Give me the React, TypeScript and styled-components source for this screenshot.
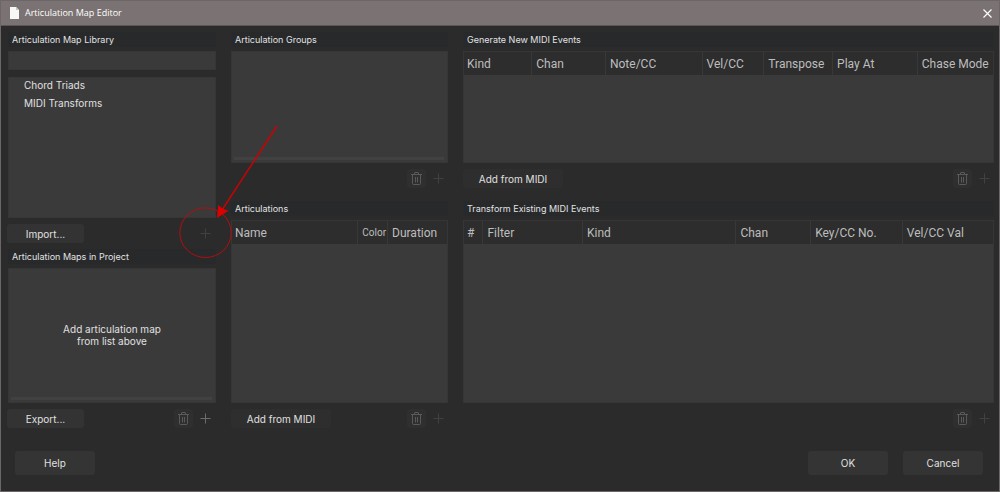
import React from 'react';
import styled, { createGlobalStyle } from 'styled-components';

const GlobalStyle = createGlobalStyle`
  *, *::before, *::after { box-sizing: border-box; }
  body { margin: 0; background: #2b2b2b; }
  button, input { font: inherit; color: inherit; }
`;

const Window = styled.div`
  position: relative;
  display: flex;
  flex-direction: column;
  min-height: 100vh;
  border: 1px solid #6b6767;
  background: #2b2b2b;
  color: #e0e0e0;
  font-family: Inter, Roboto, "Liberation Sans", sans-serif;
  font-size: 10px;
  line-height: 12px;
`;

const TitleBar = styled.header`
  display: flex;
  align-items: center;
  height: 25px;
  padding: 0 5px 0 7px;
  background: #7b7373;
  border-bottom: 1px solid #5a5656;
`;

const WindowTitle = styled.h1`
  flex: 1;
  margin: 0 0 0 5px;
  font: 400 9px/14px "Open Sans", "Noto Sans", sans-serif;
  color: #ffffff;
`;

const CloseButton = styled.button`
  display: flex;
  padding: 2px;
  border: 0;
  background: none;
`;

const Main = styled.main`
  flex: 1;
  display: grid;
  grid-template-columns: 208fr 217fr 531fr;
  gap: 15px;
  padding: 6px 5px 0 7px;
`;

const Column = styled.div`
  display: flex;
  flex-direction: column;
  min-width: 0;
`;

const Section = styled.section<{ $grow?: boolean; $after?: number }>`
  display: flex;
  flex-direction: column;
  flex: ${p => (p.$grow ? '1 0 auto' : '0 0 auto')};
  margin-bottom: ${p => p.$after ?? 0}px;
`;

const Heading = styled.h2`
  margin: 0 0 4px;
  padding: 0 4px;
  background: #27292b;
  color: #e2e2e2;
  font-size: 9px;
  font-weight: 400;
  line-height: 15px;
`;

const SearchBox = styled.input`
  width: 100%;
  height: 19px;
  margin-bottom: 7px;
  padding: 0 6px;
  border: 1px solid #363636;
  background: #3a3a3a;
  outline: none;
`;

const Panel = styled.div<{ $height: number; $grow?: boolean }>`
  display: flex;
  flex-direction: column;
  flex: ${p => (p.$grow ? '1 0 auto' : '0 0 auto')};
  min-height: ${p => p.$height}px;
  border: 1px solid #363636;
  background: #3a3a3a;
`;

const MapList = styled.ul`
  display: flex;
  flex-direction: column;
  gap: 4px;
  margin: 0;
  padding: 0 15px;
  list-style: none;
  line-height: 14px;
`;

const EmptyNote = styled.p`
  margin: auto;
  padding-top: 4px;
  text-align: center;
`;

const ScrollTrack = styled.div`
  height: 3px;
  margin: 0 3px 2px 2px;
  background: #414141;

  &:only-child { margin-top: auto; }
`;

const EventTable = styled.table`
  width: 100%;
  table-layout: fixed;
  border-collapse: collapse;
`;

const HeadCell = styled.th<{ $share: number; $small?: boolean }>`
  width: ${p => p.$share}%;
  height: 23px;
  padding: 0 0 0 4px;
  border-right: 1px solid #383838;
  background: #2d2d2d;
  color: #bdbdbd;
  font-family: Roboto, "Liberation Sans", sans-serif;
  font-size: ${p => (p.$small ? 10 : 12)}px;
  font-weight: 400;
  text-align: left;
  white-space: nowrap;

  &:first-child { padding-left: 3px; }
  &:last-child { border-right: 0; }
`;

const Toolbar = styled.div<{ $outset?: boolean }>`
  display: flex;
  align-items: center;
  gap: 3px;
  height: 19px;
  margin: ${p => (p.$outset ? '6px 1px 0 -1px' : '6px 0 0')};
`;

const Spacer = styled.span`
  flex: 1;
`;

const TextButton = styled.button<{ $width: number; $faint?: boolean }>`
  width: ${p => p.$width}px;
  height: 19px;
  padding: 0;
  border: 0;
  border-radius: 3px;
  background: ${p => (p.$faint ? '#2e2e2e' : '#333333')};
`;

const IconButton = styled.button<{ $filled?: boolean; $tone: string }>`
  display: flex;
  align-items: center;
  justify-content: center;
  width: 19px;
  height: 19px;
  padding: 0;
  border: 0;
  border-radius: 3px;
  background: ${p => (p.$filled ? '#2f2f2f' : 'none')};
  color: ${p => p.$tone};
`;

const Footer = styled.footer`
  display: flex;
  gap: 15px;
  padding: 23px 16px 16px 14px;
`;

const DialogButton = styled.button`
  width: 80px;
  height: 24px;
  padding: 0;
  border: 0;
  border-radius: 3px;
  background: #343434;
`;

const Annotation = styled.svg`
  position: absolute;
  left: 175px;
  top: 119px;
  pointer-events: none;
`;

const PageIcon = () => (
  <svg width="12" height="14" viewBox="0 0 12 14" aria-hidden="true">
    <path d="M2 1h6l3 3v9h-9z" fill="#f7f7f7" />
    <path d="M8 1v3h3z" fill="#c9c6c6" />
  </svg>
);

const CloseIcon = () => (
  <svg width="9" height="9" viewBox="0 0 9 9" aria-hidden="true">
    <path d="M.5.5l8 8M8.5.5l-8 8" stroke="#fff" strokeWidth="1.1" />
  </svg>
);

const TrashIcon = () => (
  <svg width="11" height="13" viewBox="0 0 11 13" fill="none" stroke="currentColor" aria-hidden="true">
    <path d="M0 2.5h11M3.5 2.5v-1.5q0-.5.5-.5h3q.5 0 .5.5v1.5M1.5 2.5v9q0 1 1 1h6q1 0 1-1v-9M4.5 5v5.5M6.5 5v5.5" />
  </svg>
);

const PlusIcon = () => (
  <svg width="11" height="11" viewBox="0 0 11 11" aria-hidden="true">
    <path d="M5.5.5v10M.5 5.5h10" stroke="currentColor" />
  </svg>
);

const TRASH_TONE = '#5a5a5a';

const AddRemove = ({ what, tone = '#404242', removable = true }: { what: string; tone?: string; removable?: boolean }) => (
  <>
    <Spacer />
    {removable && (
      <IconButton $filled $tone={TRASH_TONE} aria-label={`Remove ${what}`}><TrashIcon /></IconButton>
    )}
    <IconButton $tone={tone} aria-label={`Add ${what}`}><PlusIcon /></IconButton>
  </>
);

type ColumnDef = { label: string; size: number; small?: boolean };

const Table = ({ label, columns }: { label: string; columns: ColumnDef[] }) => {
  const total = columns.reduce((sum, c) => sum + c.size, 0);
  return (
    <EventTable aria-label={label}>
      <thead>
        <tr>
          {columns.map(c => (
            <HeadCell key={c.label} scope="col" $share={(c.size / total) * 100} $small={c.small}>{c.label}</HeadCell>
          ))}
        </tr>
      </thead>
    </EventTable>
  );
};

const GENERATE: ColumnDef[] = [
  { label: 'Kind', size: 68 }, { label: 'Chan', size: 74 }, { label: 'Note/CC', size: 97 },
  { label: 'Vel/CC', size: 62 }, { label: 'Transpose', size: 69 }, { label: 'Play At', size: 85 },
  { label: 'Chase Mode', size: 76 },
];

const TRANSFORM: ColumnDef[] = [
  { label: '#', size: 19 }, { label: 'Filter', size: 100 }, { label: 'Kind', size: 154 },
  { label: 'Chan', size: 75 }, { label: 'Key/CC No.', size: 92 }, { label: 'Vel/CC Val', size: 91 },
];

const ARTICULATIONS: ColumnDef[] = [
  { label: 'Name', size: 127 }, { label: 'Color', size: 30, small: true }, { label: 'Duration', size: 60 },
];

export default function App() {
  return (
    <Window>
      <GlobalStyle />
      <TitleBar>
        <PageIcon />
        <WindowTitle>Articulation Map Editor</WindowTitle>
        <CloseButton aria-label="Close"><CloseIcon /></CloseButton>
      </TitleBar>

      <Main>
        <Column>
          <Section $after={6}>
            <Heading id="library">Articulation Map Library</Heading>
            <SearchBox type="text" aria-labelledby="library" />
            <Panel $height={141}>
              <MapList>
                <li>Chord Triads</li>
                <li>MIDI Transforms</li>
              </MapList>
            </Panel>
            <Toolbar $outset>
              <TextButton $width={77}>Import...</TextButton>
              <AddRemove what="library map" removable={false} />
            </Toolbar>
          </Section>
          <Section $grow>
            <Heading>Articulation Maps in Project</Heading>
            <Panel $height={100} $grow>
              <EmptyNote>Add articulation map<br />from list above</EmptyNote>
              <ScrollTrack />
            </Panel>
            <Toolbar $outset>
              <TextButton $width={77}>Export...</TextButton>
              <AddRemove what="project map" tone="#6c6c6c" />
            </Toolbar>
          </Section>
        </Column>

        <Column>
          <Section $after={13}>
            <Heading>Articulation Groups</Heading>
            <Panel $height={112}><ScrollTrack /></Panel>
            <Toolbar><AddRemove what="group" /></Toolbar>
          </Section>
          <Section $grow>
            <Heading>Articulations</Heading>
            <Panel $height={100} $grow><Table label="Articulations" columns={ARTICULATIONS} /></Panel>
            <Toolbar>
              <TextButton $width={100} $faint>Add from MIDI</TextButton>
              <AddRemove what="articulation" />
            </Toolbar>
          </Section>
        </Column>

        <Column>
          <Section $after={13}>
            <Heading>Generate New MIDI Events</Heading>
            <Panel $height={112}><Table label="Generate New MIDI Events" columns={GENERATE} /></Panel>
            <Toolbar>
              <TextButton $width={100} $faint>Add from MIDI</TextButton>
              <AddRemove what="new event" />
            </Toolbar>
          </Section>
          <Section $grow>
            <Heading>Transform Existing MIDI Events</Heading>
            <Panel $height={100} $grow><Table label="Transform Existing MIDI Events" columns={TRANSFORM} /></Panel>
            <Toolbar><AddRemove what="transform" /></Toolbar>
          </Section>
        </Column>
      </Main>

      <Footer>
        <DialogButton>Help</DialogButton>
        <Spacer />
        <DialogButton>OK</DialogButton>
        <DialogButton>Cancel</DialogButton>
      </Footer>

      <Annotation width="110" height="145" viewBox="176 120 110 145" aria-hidden="true">
        <ellipse cx="205.5" cy="232.7" rx="25.7" ry="24.8" fill="none" stroke="#b80d0d" strokeWidth="1" />
        <path d="M277 126L222 210" stroke="#d00000" strokeWidth="1.4" />
        <path d="M217 218l1.3-13 4 3.4 6.2 2.4z" fill="#dc0000" />
      </Annotation>
    </Window>
  );
}
